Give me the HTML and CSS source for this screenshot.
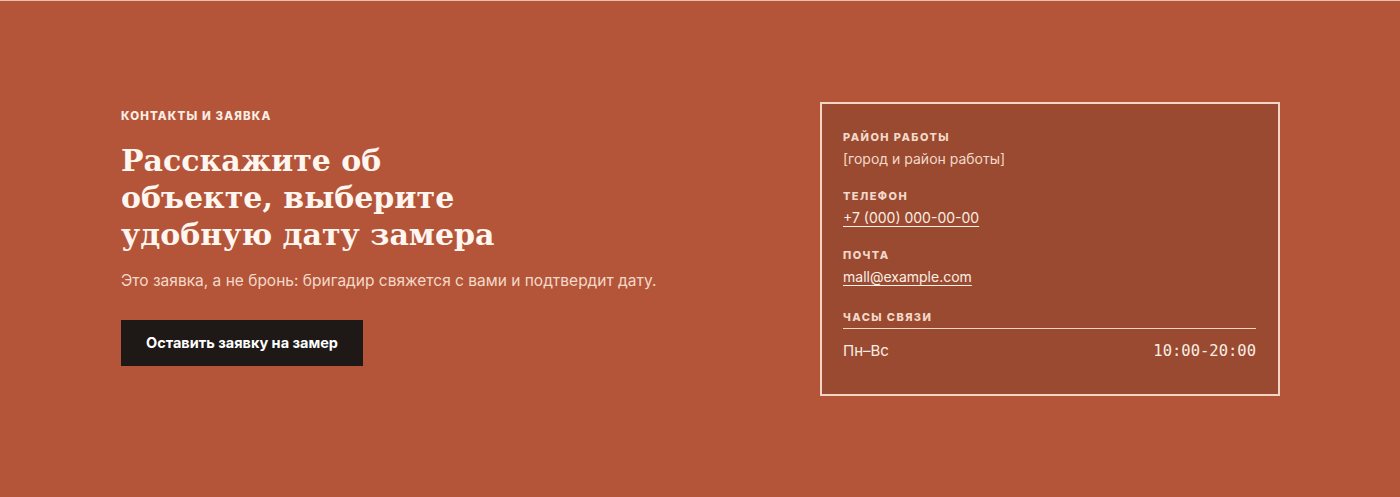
FILE: index.html
```html
<!DOCTYPE html>
<html lang="ru">
<head>
    <meta charset="UTF-8">
    <meta name="viewport" content="width=device-width, initial-scale=1.0">
    <title>Контакты и заявка</title>
    <link rel="stylesheet" href="styles.css">
</head>
<body>
    <section class="contacts">
        <div class="container">
            <div class="intro">
                <div class="eyebrow">Контакты и заявка</div>
                <h2 class="title">Расскажите об<br>объекте, выберите<br>удобную дату замера</h2>
                <p class="lead">Это заявка, а не бронь: бригадир свяжется с вами и подтвердит дату.</p>
                <a class="btn" href="#request">Оставить заявку на замер</a>
            </div>

            <aside class="card">
                <div class="item">
                    <div class="label">Район работы</div>
                    <div class="value">[город и район работы]</div>
                </div>
                <div class="item">
                    <div class="label">Телефон</div>
                    <a class="value link" href="tel:+70000000000">+7 (000) 000-00-00</a>
                </div>
                <div class="item">
                    <div class="label">Почта</div>
                    <a class="value link" href="mailto:mail@example.com">mall@example.com</a>
                </div>
                <div class="item item-hours">
                    <div class="label label-rule">Часы связи</div>
                    <div class="hours">
                        <span>Пн–Вс</span>
                        <span class="time">10:00-20:00</span>
                    </div>
                </div>
            </aside>
        </div>
    </section>
</body>
</html>
```

FILE: styles.css
```css
:root {
    --bg-color: #b4553a;
    --card-color: #9a4a30;
    --text-color: #fbeee4;
    --muted-color: #f3d9c9;
    --line-color: #f1d6c4;
    --dark-color: #1e1916;
}

body {
    margin: 0;
    background-color: var(--bg-color);
    color: var(--text-color);
    font-family: Inter, 'Noto Sans', sans-serif;
}

.contacts {
    min-height: 497px;
    box-sizing: border-box;
    border-top: 1px solid #e6c2ac;
    padding: 101px 0 60px;
}

.container {
    max-width: 1160px;
    margin: 0 auto;
    display: grid;
    grid-template-columns: 1fr 460px;
    align-items: start;
}

.intro {
    padding-top: 6px;
    padding-left: 1px;
}

.eyebrow {
    font-size: 11.5px;
    font-weight: 800;
    letter-spacing: 0.1em;
    text-transform: uppercase;
    line-height: 16px;
}

.title {
    margin: 18px 0 0;
    font-family: 'DejaVu Serif', 'Liberation Serif', serif;
    font-size: 30px;
    font-weight: bold;
    line-height: 37px;
    color: #fff6ef;
}

.lead {
    margin: 17px 0 0;
    font-size: 15.5px;
    line-height: 22px;
    color: var(--muted-color);
}

.btn {
    display: inline-block;
    margin-top: 28px;
    padding: 0 25px;
    height: 46px;
    line-height: 46px;
    background-color: var(--dark-color);
    color: #fff;
    font-size: 14.5px;
    font-weight: 700;
    text-decoration: none;
}

.card {
    background-color: var(--card-color);
    border: 2px solid var(--line-color);
    padding: 25px 22px 33px 21px;
    display: flex;
    flex-direction: column;
    gap: 19px;
}

.item-hours {
    margin-top: 3px;
}

.label {
    font-size: 11px;
    font-weight: 800;
    letter-spacing: 0.13em;
    text-transform: uppercase;
    line-height: 16px;
    color: var(--muted-color);
}

.label-rule {
    padding-bottom: 3px;
    border-bottom: 1px solid var(--line-color);
}

.value {
    display: inline-block;
    margin-top: 4px;
    font-size: 14px;
    line-height: 20px;
    color: var(--muted-color);
}

.link {
    color: var(--text-color);
    text-decoration: underline;
    text-underline-offset: 3px;
    text-decoration-thickness: 1px;
}

.hours {
    display: flex;
    justify-content: space-between;
    align-items: baseline;
    margin-top: 12px;
    font-size: 15px;
    line-height: 20px;
}

.time {
    font-family: 'DejaVu Sans Mono', 'Liberation Mono', monospace;
    font-size: 15.5px;
}
```
